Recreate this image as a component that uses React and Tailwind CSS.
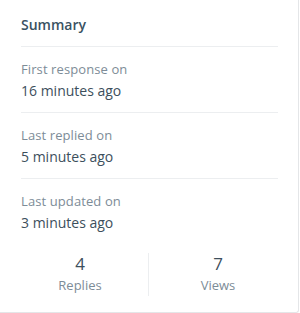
export default function App() {
  const rows = [
    { label: "First response on", value: "16 minutes ago" },
    { label: "Last replied on", value: "5 minutes ago" },
    { label: "Last updated on", value: "3 minutes ago" },
  ];

  return (
    <div className="h-[313px] w-[300px] bg-white font-['Open_Sans',sans-serif]">
      <div className="h-[313px] w-[299px] rounded-br-[3px] border-r border-b border-[#e4e6e8] bg-white">
        {/* Header */}
        <div className="ml-[21px] w-[257px]">
          <h2 className="pt-4 pb-3 text-[14px] leading-[18px] font-semibold text-[#3a5262]">
            Summary
          </h2>

          {rows.map((row) => (
            <div
              key={row.label}
              className="border-t border-[#eceef0] pt-[12px] pb-[11px] leading-[21px]"
            >
              <p className="text-[13px] tracking-[0.1px] text-[#7d8c97]">
                {row.label}
              </p>
              <p className="text-[14px] text-[#3d4f5c]">{row.value}</p>
            </div>
          ))}
        </div>

        {/* Stats */}
        <div className="mt-[9px] ml-[12px] flex w-[276px]">
          <div className="w-[137px] border-r border-[#eceef0] text-center">
            <p className="text-[17px] leading-[22px] text-[#3d4f5c]">4</p>
            <p className="text-[13px] leading-[21px] text-[#7d8c97]">
              Replies
            </p>
          </div>
          <div className="w-[138px] text-center">
            <p className="text-[17px] leading-[22px] text-[#3d4f5c]">7</p>
            <p className="text-[13px] leading-[21px] text-[#7d8c97]">
              Views
            </p>
          </div>
        </div>
      </div>
    </div>
  );
}
